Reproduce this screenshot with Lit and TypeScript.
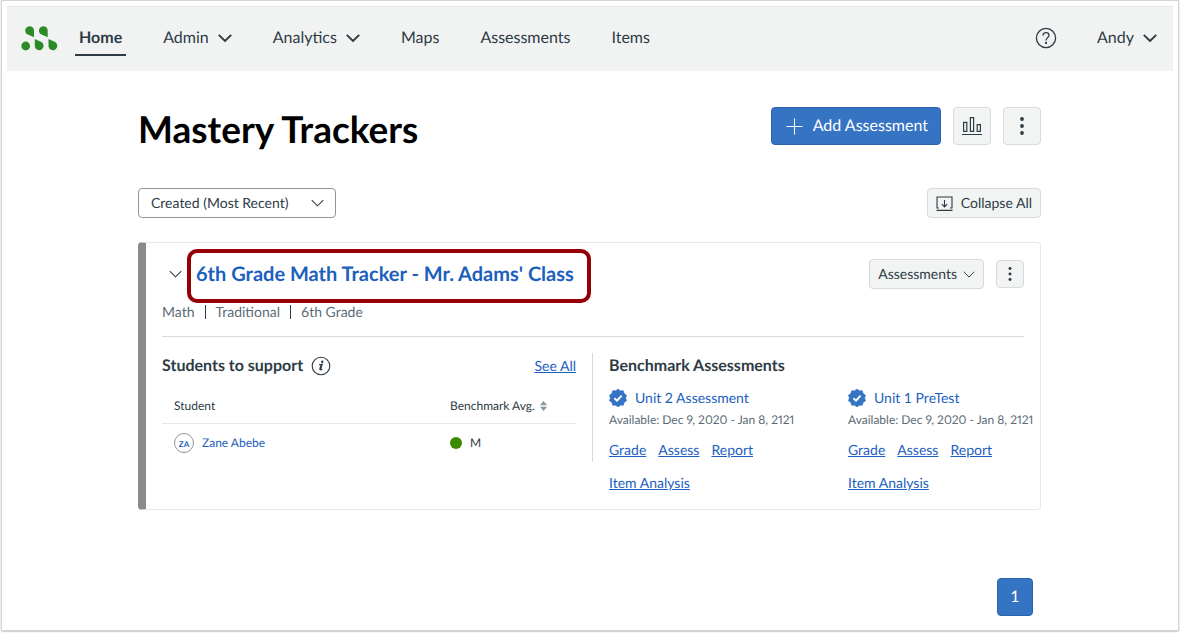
import { LitElement, html, svg, css, nothing } from "lit";
import { customElement, state } from "lit/decorators.js";

interface NavItem {
  label: string;
  menu?: boolean;
  current?: boolean;
}

interface Assessment {
  title: string;
  available: string;
}

const NAV: NavItem[] = [
  { label: "Home", current: true },
  { label: "Admin", menu: true },
  { label: "Analytics", menu: true },
  { label: "Maps" },
  { label: "Assessments" },
  { label: "Items" },
];

const ASSESSMENTS: Assessment[] = [
  { title: "Unit 2 Assessment", available: "Dec 9, 2020 - Jan 8, 2121" },
  { title: "Unit 1 PreTest", available: "Dec 9, 2020 - Jan 8, 2121" },
];

const ACTIONS = ["Grade", "Assess", "Report", "Item Analysis"];
const TAGS = ["Math", "Traditional", "6th Grade"];

const chevron = (width: number, stroke: number) => html`
  <svg class="icon" width=${width} height=${Math.round(width / 2) + 1} viewBox="0 0 14 8" fill="none"
    stroke="currentColor" stroke-width=${stroke} aria-hidden="true">
    <path d="M.8 .8 7 7 13.2 .8" />
  </svg>`;

const kebab = (height: number) => html`
  <svg class="icon" width="4" height=${height} viewBox="0 0 4 18" fill="currentColor" aria-hidden="true">
    <circle cx="2" cy="2" r="1.9" /><circle cx="2" cy="9" r="1.9" /><circle cx="2" cy="16" r="1.9" />
  </svg>`;

const sealPoints = Array.from({ length: 20 }, (_, i) => {
  const r = i % 2 ? 7.6 : 9;
  const a = (Math.PI * i) / 10 - Math.PI / 2;
  return `${(9 + r * Math.cos(a)).toFixed(2)},${(9 + r * Math.sin(a)).toFixed(2)}`;
}).join(" ");

const seal = html`
  <svg class="icon seal" width="18" height="18" viewBox="0 0 18 18" aria-hidden="true">
    ${svg`<polygon points=${sealPoints} fill="currentColor" stroke="currentColor" stroke-width=".6" stroke-linejoin="round" />`}
    <path d="M5.4 9.2 8 11.6 12.6 6.7" fill="none" stroke="#fff" stroke-width="1.9" />
  </svg>`;

@customElement("app-root")
export class AppRoot extends LitElement {
  @state() private open = true;

  static styles = css`
    :host {
      display: block;
      min-height: 100vh;
      box-sizing: border-box;
      padding: 1px 2px 3px 2px;
      background: #fff;
      color: #2d3b45;
      font: 14px/20px Lato, "Open Sans", sans-serif;
      text-rendering: geometricPrecision;
    }
    * {
      box-sizing: border-box;
    }
    button,
    select {
      font: inherit;
      color: inherit;
      text-rendering: inherit;
      cursor: pointer;
    }
    h1, h2, h3, ul, p {
      margin: 0;
      padding: 0;
    }
    ul {
      list-style: none;
    }
    a {
      color: #1c60bd;
    }
    .icon {
      display: block;
      flex: none;
    }
    .frame {
      min-height: calc(100vh - 4px);
      padding: 5px;
      background: #fff;
      box-shadow: 0 0 1px 1px #d4d4d4, 0 1px 2px 0 #777;
    }

    .bar {
      display: flex;
      align-items: center;
      height: 65px;
      padding: 0 12px 0 14px;
      background: #f1f3f3;
      border-top: 1px solid #e3e7ec;
      font-size: 16px;
      line-height: 24px;
    }
    .logo {
      margin-right: 17px;
    }
    .nav {
      display: flex;
      gap: 33px;
    }
    .navlink {
      display: flex;
      align-items: center;
      gap: 9px;
      padding: 4px;
      border: 0;
      border-bottom: 2px solid transparent;
      background: none;
      color: #2d3b45;
      text-decoration: none;
    }
    .current {
      font-weight: 700;
      border-color: #2d3b45;
    }
    .tools {
      display: flex;
      align-items: center;
      gap: 36px;
      margin-left: auto;
    }
    .help {
      padding: 0;
      border: 0;
      border-bottom: 2px solid transparent;
      background: none;
    }

    .page {
      padding: 36px 132px 4px 131px;
    }
    .row {
      display: flex;
      align-items: center;
      justify-content: space-between;
      gap: 12px;
    }
    .top {
      align-items: flex-start;
    }
    h1 {
      color: #000;
      font-size: 37px;
      line-height: 44px;
      font-weight: 700;
    }
    .buttons {
      display: flex;
      align-items: center;
      gap: 12px;
    }
    .btn {
      display: flex;
      align-items: center;
      justify-content: center;
      gap: 8px;
      height: 30px;
      padding: 0 8px;
      background: #f2f4f4;
      border: 1px solid #d7dade;
      border-radius: 4px;
      white-space: nowrap;
    }
    .primary {
      gap: 10px;
      height: 38px;
      padding: 0 12px 0 14px;
      background: #3573c3;
      border-color: #2b63ad;
      color: #fff;
      font-size: 16px;
    }
    .square {
      width: 38px;
      height: 38px;
      padding: 0;
    }
    .small {
      width: 28px;
      height: 28px;
      padding: 0;
    }
    .menu {
      gap: 6px;
    }
    .sorting {
      margin-top: 37px;
    }
    .select {
      display: grid;
      align-items: center;
    }
    .select > * {
      grid-area: 1 / 1;
    }
    .select .icon {
      justify-self: end;
      margin-right: 12px;
      pointer-events: none;
    }
    select {
      appearance: none;
      width: 198px;
      height: 30px;
      padding: 0 32px 0 12px;
      background: #fff;
      border: 1px solid #8b969e;
      border-radius: 4px;
    }

    .card {
      margin-top: 24px;
      padding: 16px 16px 15px;
      border: 1px solid #e6e8ea;
      border-left: 8px solid #8b8b8b;
      border-radius: 4px;
    }
    .heading {
      display: flex;
      align-items: center;
      gap: 14px;
      padding-left: 7px;
    }
    .toggle {
      padding: 0;
      border: 0;
      background: none;
    }
    h2 {
      position: relative;
      font-size: 20px;
      line-height: 30px;
      font-weight: 700;
    }
    h2 a {
      text-decoration: none;
    }
    .mark {
      position: absolute;
      inset: -10px -17px -14px -9px;
      border: 4px solid #960005;
      border-radius: 10px;
      pointer-events: none;
    }
    .tags {
      display: flex;
      align-items: center;
      margin-top: 13px;
      color: #5c6b76;
    }
    .tags li + li {
      display: flex;
      align-items: center;
    }
    .tags li + li::before {
      content: "";
      width: 1px;
      height: 14px;
      margin: 0 10px;
      background: #2d3b45;
    }
    .body {
      display: grid;
      grid-template-columns: 1fr 1fr;
      align-items: start;
      margin-top: 14px;
      padding-top: 16px;
      border-top: 1px solid #d9dcdf;
    }
    .students {
      padding-right: 16px;
      border-right: 1px solid #d5d8dc;
    }
    .benchmarks {
      margin-right: -16px;
      padding-left: 16px;
    }
    h3 {
      font-size: 16px;
      line-height: 26px;
      font-weight: 700;
    }
    .title {
      display: flex;
      align-items: center;
      gap: 8px;
    }
    table {
      width: 100%;
      margin-top: 10px;
      border-collapse: collapse;
      table-layout: fixed;
      font-size: 12px;
    }
    th {
      height: 34px;
      padding: 0 12px;
      border-bottom: 1px solid #e6e8ea;
      font-weight: 400;
      text-align: left;
    }
    .score {
      width: 138px;
    }
    td {
      height: 39px;
      padding: 0 12px;
    }
    td a {
      text-decoration: none;
    }
    .cell {
      display: flex;
      align-items: center;
      gap: 8px;
    }
    .sort {
      gap: 5px;
      padding: 0;
      border: 0;
      background: none;
    }
    .avatar {
      display: grid;
      place-items: center;
      width: 20px;
      height: 20px;
      border: 1px solid #8b969e;
      border-radius: 50%;
      color: #1c60bd;
      font-size: 8px;
      font-weight: 700;
    }
    .dot {
      width: 12px;
      height: 12px;
      border-radius: 50%;
      background: #3d8b00;
    }
    .assessments {
      display: grid;
      grid-template-columns: 1fr 1fr;
      gap: 47px;
      margin-top: 8px;
      line-height: 22px;
      white-space: nowrap;
    }
    .title a {
      text-decoration: none;
    }
    .title .plain {
      text-decoration: underline;
      margin-left: auto;
    }
    .seal {
      color: #3573c3;
    }
    .when {
      color: #5c6b76;
      font-size: 12px;
      font-variant-numeric: proportional-nums;
    }
    .actions {
      display: flex;
      flex-wrap: wrap;
      gap: 11px 12px;
      margin-top: 8px;
    }
    .pager {
      display: flex;
      justify-content: flex-end;
      margin-top: 68px;
      padding-right: 8px;
    }
    .pagenum {
      width: 36px;
      padding: 0;
    }
    @media (max-width: 1000px) {
      .page {
        padding-left: 24px;
        padding-right: 24px;
      }
    }
  `;

  private renderNav() {
    return html`
      <header class="bar">
        <svg class="icon logo" width="37" height="26" viewBox="0 0 37 26" fill="#2d8b27" role="img" aria-label="Logo">
          <circle cx="4.7" cy="20" r="4.4" />
          <path d="M13 11.2 6.3 8.3A4.38 4.38 0 1 1 13 4.6Z" />
          <path d="M26.7 11.2 20 8.3A4.38 4.38 0 1 1 26.7 4.6Z" />
          <path d="M13.8 13.1 20.5 16.1A4.38 4.38 0 1 1 13.8 19.8Z" />
          <path d="M27.5 13.1 34.2 16.1A4.38 4.38 0 1 1 27.5 19.8Z" />
        </svg>
        <nav class="nav">
          ${NAV.map((item) =>
            item.menu
              ? html`<button class="navlink" aria-haspopup="true">${item.label}${chevron(14, 1.9)}</button>`
              : html`<a class="navlink ${item.current ? "current" : ""}" href="#">${item.label}</a>`
          )}
        </nav>
        <div class="tools">
          <button class="help" aria-label="Help">
            <svg class="icon" width="22" height="22" viewBox="0 0 22 22" fill="none" stroke="currentColor" stroke-width="1.3">
              <circle cx="11" cy="11" r="9.6" />
              <path d="M8 8.6C8 6.7 9.3 5.6 11 5.6s3 1.1 3 2.7c0 2.3-3 2.4-3 5.2" />
              <circle cx="11" cy="15.9" r=".5" fill="currentColor" />
            </svg>
          </button>
          <button class="navlink" aria-haspopup="true">Andy${chevron(14, 1.9)}</button>
        </div>
      </header>
    `;
  }

  private renderStudents() {
    return html`
      <section class="students">
        <div class="title">
          <h3>Students to support</h3>
          <svg class="icon" width="20" height="20" viewBox="0 0 20 20" role="img" aria-label="Information">
            <circle cx="10" cy="10" r="8.8" fill="none" stroke="currentColor" stroke-width="1.1" />
            <circle cx="11.2" cy="5.7" r="1.2" fill="currentColor" />
            <path d="M8 8.7 11.2 8.2 9.6 13.4Q9.4 14.4 11.4 13.2" fill="none" stroke="currentColor" stroke-width="1.1" />
            <path d="M10.4 8.5 8.9 14" stroke="currentColor" stroke-width="1.7" />
          </svg>
          <a class="plain" href="#">See All</a>
        </div>
        <table>
          <thead>
            <tr>
              <th scope="col">Student</th>
              <th class="score" scope="col">
                <button class="cell sort">
                  Benchmark Avg.
                  <svg class="icon" width="7" height="10" viewBox="0 0 7 10" fill="#8b969e" aria-hidden="true">
                    <path d="M3.5 0 7 4.2H0ZM3.5 10 0 5.8H7Z" />
                  </svg>
                </button>
              </th>
            </tr>
          </thead>
          <tbody>
            <tr>
              <td>
                <div class="cell"><span class="avatar">ZA</span><a href="#">Zane Abebe</a></div>
              </td>
              <td>
                <div class="cell"><span class="dot"></span>M</div>
              </td>
            </tr>
          </tbody>
        </table>
      </section>
    `;
  }

  private renderBenchmarks() {
    return html`
      <section class="benchmarks">
        <h3>Benchmark Assessments</h3>
        <div class="assessments">
          ${ASSESSMENTS.map(
            (a) => html`
              <article>
                <div class="title">${seal}<a href="#">${a.title}</a></div>
                <p class="when">Available: ${a.available}</p>
                <div class="actions">${ACTIONS.map((x) => html`<a href="#">${x}</a>`)}</div>
              </article>
            `
          )}
        </div>
      </section>
    `;
  }

  render() {
    return html`
      <div class="frame">
        ${this.renderNav()}
        <main class="page">
          <div class="row top">
            <h1>Mastery Trackers</h1>
            <div class="buttons">
              <button class="btn primary">
                <svg class="icon" width="17" height="17" viewBox="0 0 17 17" stroke="currentColor" stroke-width="1.1" aria-hidden="true">
                  <path d="M8.5 .5V16.5M.5 8.5H16.5" />
                </svg>
                Add Assessment
              </button>
              <button class="btn square" aria-label="Reports">
                <svg class="icon" width="20" height="20" viewBox="0 0 20 20" fill="none" stroke="currentColor" stroke-width="1.2" aria-hidden="true">
                  <path d="M1.6 6.4H4.8V15.4H1.6ZM8.4 1.6H11.6V15.4H8.4ZM15.2 8.6H18.4V15.4H15.2ZM0 18.5H20" />
                </svg>
              </button>
              <button class="btn square" aria-label="More options">${kebab(18)}</button>
            </div>
          </div>
          <div class="row sorting">
            <div class="select">
              <select aria-label="Sort trackers">
                <option>Created (Most Recent)</option>
              </select>
              ${chevron(13, 1.1)}
            </div>
            <button class="btn" @click=${() => (this.open = false)}>
              <svg class="icon" width="17" height="15" viewBox="0 0 17 15" fill="none" stroke="currentColor" stroke-width="1.1" aria-hidden="true">
                <path d="M3 12H1V1H16V12H14M.5 14.4H16.5M8.5 4V11M5.9 8.2 8.5 10.9 11.1 8.2" />
              </svg>
              Collapse All
            </button>
          </div>
          <section class="card">
            <div class="row">
              <div class="heading">
                <button class="toggle" aria-label="Toggle tracker" aria-expanded=${this.open ? "true" : "false"}
                  @click=${() => (this.open = !this.open)}>${chevron(13, 1.1)}</button>
                <h2><a href="#">6th Grade Math Tracker - Mr. Adams' Class</a><span class="mark"></span></h2>
              </div>
              <div class="buttons">
                <button class="btn menu" aria-haspopup="true">Assessments${chevron(12, 1.1)}</button>
                <button class="btn small" aria-label="Tracker options">${kebab(14)}</button>
              </div>
            </div>
            <ul class="tags">${TAGS.map((t) => html`<li>${t}</li>`)}</ul>
            ${this.open ? html`<div class="body">${this.renderStudents()}${this.renderBenchmarks()}</div>` : nothing}
          </section>
          <nav class="pager" aria-label="Pages">
            <button class="btn primary pagenum" aria-current="page">1</button>
          </nav>
        </main>
      </div>
    `;
  }
}
